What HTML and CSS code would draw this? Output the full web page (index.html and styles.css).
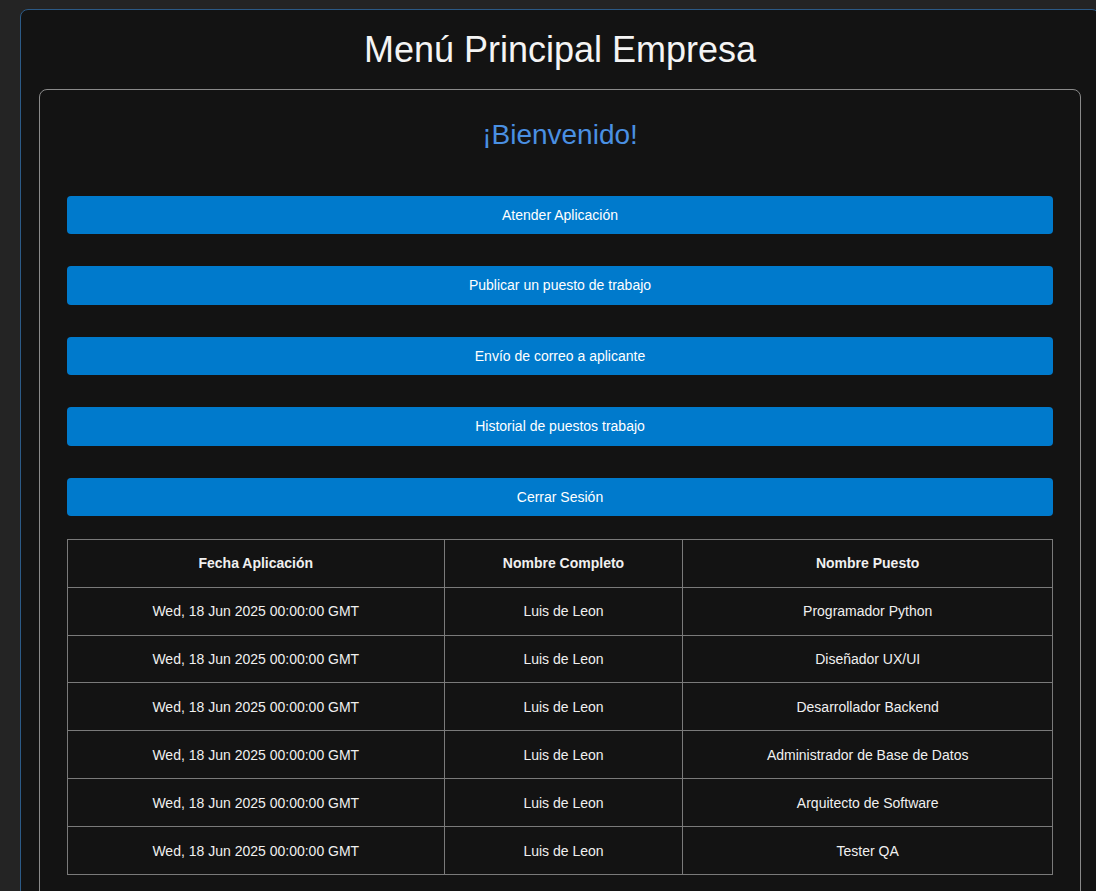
FILE: index.html
```html
<!DOCTYPE html>
<html lang="es">
<head>
<meta charset="utf-8">
<title>Menú Principal Empresa</title>
<link rel="stylesheet" href="styles.css">
</head>
<body>
<div class="container">
  <h1 class="title">Menú Principal Empresa</h1>
  <div class="card">
    <h2 class="welcome">¡Bienvenido!</h2>
    <div class="actions">
      <button class="btn">Atender Aplicación</button>
      <button class="btn">Publicar un puesto de trabajo</button>
      <button class="btn">Envío de correo a aplicante</button>
      <button class="btn">Historial de puestos trabajo</button>
      <button class="btn">Cerrar Sesión</button>
    </div>
    <table class="apps">
      <colgroup>
        <col class="c1"><col class="c2"><col class="c3">
      </colgroup>
      <thead>
        <tr><th>Fecha Aplicación</th><th>Nombre Completo</th><th>Nombre Puesto</th></tr>
      </thead>
      <tbody>
        <tr><td>Wed, 18 Jun 2025 00:00:00 GMT</td><td>Luis de Leon</td><td>Programador Python</td></tr>
        <tr><td>Wed, 18 Jun 2025 00:00:00 GMT</td><td>Luis de Leon</td><td>Diseñador UX/UI</td></tr>
        <tr><td>Wed, 18 Jun 2025 00:00:00 GMT</td><td>Luis de Leon</td><td>Desarrollador Backend</td></tr>
        <tr><td>Wed, 18 Jun 2025 00:00:00 GMT</td><td>Luis de Leon</td><td>Administrador de Base de Datos</td></tr>
        <tr><td>Wed, 18 Jun 2025 00:00:00 GMT</td><td>Luis de Leon</td><td>Arquitecto de Software</td></tr>
        <tr><td>Wed, 18 Jun 2025 00:00:00 GMT</td><td>Luis de Leon</td><td>Tester QA</td></tr>
      </tbody>
    </table>
  </div>
</div>
</body>
</html>
```

FILE: styles.css
```css
html, body {
  margin: 0;
  padding: 0;
  background: #242424;
  overflow: hidden;
  font-family: "Liberation Sans", Arial, sans-serif;
  color: #f0f0f0;
}

.container {
  box-sizing: border-box;
  width: 1080px;
  margin: 9px 0 0 20px;
  padding: 19px 18px 40px;
  background: #131313;
  border: 1px solid #2c5a86;
  border-radius: 8px;
}

.title {
  margin: 0 0 19px;
  font-size: 36px;
  font-weight: normal;
  line-height: 41px;
  text-align: center;
  color: #f4f4f4;
}

.card {
  border: 1px solid #8a8a8a;
  border-radius: 8px;
  padding: 29px 27px 30px;
}

.welcome {
  margin: 0 0 45px;
  font-size: 28px;
  font-weight: normal;
  line-height: 32px;
  text-align: center;
  color: #4a90e2;
}

.actions {
  display: flex;
  flex-direction: column;
  gap: 32.2px;
}

.btn {
  display: block;
  width: 100%;
  height: 38.3px;
  border: none;
  border-radius: 4px;
  background: #007acc;
  color: #ffffff;
  font-family: "Liberation Sans", Arial, sans-serif;
  font-size: 14px;
  line-height: 16px;
  padding: 0 0 1px;
}

.apps {
  margin-top: 22.5px;
  width: 100%;
  border-collapse: collapse;
  font-size: 14px;
  color: #f0f0f0;
}

.apps .c1 { width: 377px; }
.apps .c2 { width: 239px; }
.apps .c3 { width: 370px; }

.apps th, .apps td {
  border: 1px solid #7a7a7a;
  height: 47.9px;
  padding: 0 8px;
  text-align: center;
  box-sizing: border-box;
}

.apps th {
  font-weight: bold;
}
```
